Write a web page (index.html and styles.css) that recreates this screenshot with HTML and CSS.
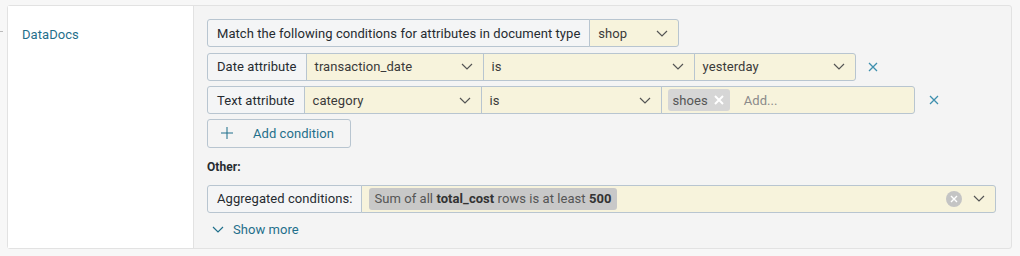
FILE: index.html
```html
<!DOCTYPE html>
<html lang="en">
<head>
    <meta charset="UTF-8">
    <title>Search conditions</title>
    <link rel="stylesheet" href="styles.css">
</head>
<body>
    <div class="tick"></div>
    <div class="card">
        <aside class="side">
            <a class="source" href="#">DataDocs</a>
        </aside>

        <section class="content">
            <div class="row">
                <span class="seg label first">Match the following conditions for attributes in document type</span>
                <span class="seg select last w-shop">shop <svg class="chev" viewBox="0 0 12 7"><path d="M1 1l5 5 5-5"/></svg></span>
            </div>

            <div class="row">
                <span class="seg label first">Date attribute</span>
                <span class="seg select w-attr">transaction_date <svg class="chev" viewBox="0 0 12 7"><path d="M1 1l5 5 5-5"/></svg></span>
                <span class="seg select w-op1">is <svg class="chev" viewBox="0 0 12 7"><path d="M1 1l5 5 5-5"/></svg></span>
                <span class="seg select last w-val">yesterday <svg class="chev" viewBox="0 0 12 7"><path d="M1 1l5 5 5-5"/></svg></span>
                <svg class="remove" viewBox="0 0 10 10"><path d="M1 1l8 8M9 1l-8 8"/></svg>
            </div>

            <div class="row">
                <span class="seg label first">Text attribute</span>
                <span class="seg select w-attr">category <svg class="chev" viewBox="0 0 12 7"><path d="M1 1l5 5 5-5"/></svg></span>
                <span class="seg select w-op2">is <svg class="chev" viewBox="0 0 12 7"><path d="M1 1l5 5 5-5"/></svg></span>
                <span class="seg multi last w-tags">
                    <span class="tag">shoes <svg class="tag-x" viewBox="0 0 10 10"><path d="M1 1l8 8M9 1l-8 8"/></svg></span>
                    <span class="placeholder">Add...</span>
                </span>
                <svg class="remove remove-far" viewBox="0 0 10 10"><path d="M1 1l8 8M9 1l-8 8"/></svg>
            </div>

            <button class="add-btn">
                <svg class="plus" viewBox="0 0 14 14"><path d="M7 0v14M0 7h14"/></svg>
                Add condition
            </button>

            <h4 class="other">Other:</h4>

            <div class="row">
                <span class="seg label first">Aggregated conditions:</span>
                <span class="seg multi last grow">
                    <span class="agg-tag">Sum of all <b>total_cost</b> rows is at least <b>500</b></span>
                    <span class="clear"><svg viewBox="0 0 10 10"><path d="M2 2l6 6M8 2l-6 6"/></svg></span>
                    <svg class="chev agg-chev" viewBox="0 0 12 7"><path d="M1 1l5 5 5-5"/></svg>
                </span>
            </div>

            <a class="more" href="#">
                <svg class="chev more-chev" viewBox="0 0 12 7"><path d="M1 1l5 5 5-5"/></svg>
                Show more
            </a>
        </section>
    </div>
</body>
</html>
```

FILE: styles.css
```css
body {
    font-family: Roboto, 'Liberation Sans', sans-serif;
    font-size: 13px;
    letter-spacing: 0.06px;
    color: #262b30;
    margin: 0;
    padding: 5px 8px 0 7px;
    background-color: #f7f7f7;
    position: relative;
}

.tick {
    position: absolute;
    left: 0;
    top: 31px;
    width: 3px;
    height: 1px;
    background-color: #bbb;
}

.card {
    display: flex;
    height: 244px;
    border: 1px solid #e2e2e2;
    border-radius: 3px;
    background-color: #f4f4f4;
    box-sizing: border-box;
}

.side {
    width: 186px;
    background-color: #fff;
    border-right: 1px solid #e2e2e2;
    padding: 21px 0 0 14px;
    box-sizing: border-box;
}

.source {
    color: #1f6f8b;
    text-decoration: none;
}

.content {
    flex: 1;
    padding: 13px 0 0 13px;
}

.row {
    display: flex;
    align-items: center;
    height: 28px;
    margin-bottom: 5.5px;
}

.seg {
    display: flex;
    align-items: center;
    height: 28px;
    box-sizing: border-box;
    border: 1px solid #b8c5d0;
    margin-left: -1px;
    padding: 0 9px;
    white-space: nowrap;
}

.seg.first {
    margin-left: 0;
    border-radius: 3px 0 0 3px;
}

.seg.last {
    border-radius: 0 3px 3px 0;
}

.label {
    background-color: #f4f5f6;
}

.select {
    background-color: #f7f3dc;
    color: #3a3a3a;
    justify-content: space-between;
    padding: 0 8px;
}

.multi {
    background-color: #f7f3dc;
    padding: 0 4px 0 6px;
}

.w-shop { width: 90px; }
.w-attr { width: 178px; }
.w-op1 { width: 212px; }
.w-op2 { width: 181px; }
.w-val { width: 162px; }
.w-tags { width: 254px; }
.grow { width: 635px; }

.chev {
    width: 12px;
    height: 7px;
    fill: none;
    stroke: #555;
    stroke-width: 1.2;
    margin-right: 2px;
}

.remove {
    width: 10px;
    height: 10px;
    margin-left: 12px;
    fill: none;
    stroke: #3e8fae;
    stroke-width: 1.3;
}

.remove-far {
    margin-left: 14px;
}

.tag {
    display: inline-flex;
    align-items: center;
    height: 22px;
    padding: 0 6px 0 5px;
    background-color: #d6d6d6;
    border-radius: 3px;
    color: #555;
}

.tag-x {
    width: 10px;
    height: 10px;
    margin-left: 6px;
    fill: none;
    stroke: #fff;
    stroke-width: 2;
}

.placeholder {
    color: #8a8a8a;
    margin-left: 14px;
}

.add-btn {
    display: flex;
    align-items: center;
    width: 144px;
    height: 29px;
    padding: 0 0 0 13px;
    border: 1px solid #b8c5d0;
    border-radius: 3px;
    background-color: #f4f4f4;
    color: #1f6f8b;
    font-family: inherit;
    font-size: 13px;
    letter-spacing: inherit;
    margin-top: -1px;
}

.plus {
    width: 12px;
    height: 12px;
    fill: none;
    stroke: #1f6f8b;
    stroke-width: 1.2;
    margin-right: 20px;
}

.other {
    font-size: 12px;
    font-weight: bold;
    margin: 12px 0 11px;
    color: #262b30;
}

.agg-tag {
    display: inline-block;
    background-color: #c8c8c8;
    color: #555;
    border-radius: 3px;
    height: 22px;
    line-height: 22px;
    padding: 0 5px;
    margin-left: 1px;
}

.agg-tag b {
    color: #333;
}

.clear {
    margin-left: auto;
    width: 16px;
    height: 16px;
    border-radius: 50%;
    background-color: #c4c4c4;
    display: flex;
    align-items: center;
    justify-content: center;
    margin-right: 11px;
}

.clear svg {
    width: 10px;
    height: 10px;
    fill: none;
    stroke: #fff;
    stroke-width: 1.4;
}

.agg-chev {
    margin-right: 6px;
}

.more {
    display: flex;
    align-items: center;
    color: #1f6f8b;
    text-decoration: none;
    margin: 9px 0 0 5px;
}

.more-chev {
    stroke: #1f6f8b;
    margin-right: 9px;
}
```
